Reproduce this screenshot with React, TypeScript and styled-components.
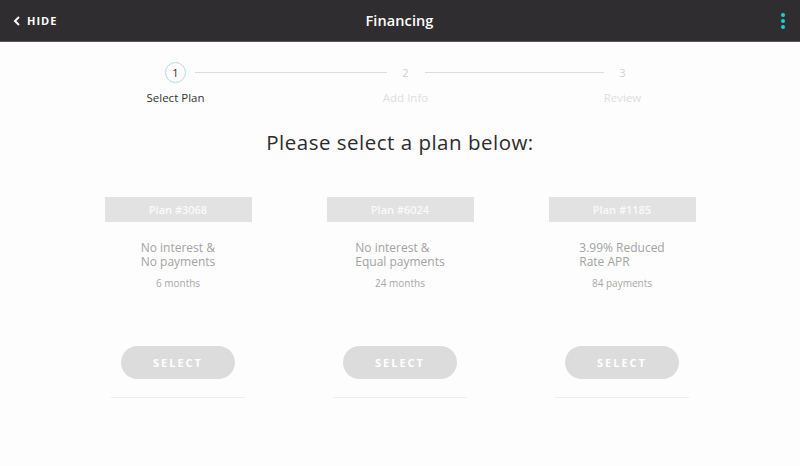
import React from "react";
import styled, { createGlobalStyle } from "styled-components";

const Global = createGlobalStyle`
  html, body { margin: 0; padding: 0; background: #fdfdfd; }
  body { font-family: "Open Sans", "Liberation Sans", sans-serif; }
  * { box-sizing: border-box; }
`;

const Page = styled.div`
  width: 800px;
  height: 466px;
  display: flex;
  flex-direction: column;
  background: #fdfdfd;
  overflow: hidden;
`;

const TopBar = styled.header`
  height: 42px;
  background: #2f2d2f;
  border-bottom: 1px solid #5a585a;
  display: grid;
  grid-template-columns: 1fr auto 1fr;
  align-items: center;
  padding: 0 14px 0 13px;
  color: #fff;
`;

const Back = styled.div`
  display: flex;
  align-items: center;
  gap: 6px;
  font-size: 11px;
  font-weight: 700;
  letter-spacing: 1px;
`;

const Title = styled.div`
  font-size: 14.5px;
  font-weight: 600;
  letter-spacing: 0.1px;
`;

const Dots = styled.div`
  justify-self: end;
  display: flex;
  flex-direction: column;
  gap: 2px;
  padding-right: 1px;
`;

const Dot = styled.span`
  width: 4px;
  height: 4px;
  border-radius: 50%;
  background: #1ccfcf;
`;

const Content = styled.main`
  display: flex;
  flex-direction: column;
  align-items: center;
  padding-top: 20px;
`;

const stepCols = "60px 170px 60px 157px 60px";

const Stepper = styled.div`
  display: grid;
  grid-template-columns: ${stepCols};
  align-items: center;
  margin-left: -2px;
`;

const StepCell = styled.div`
  display: flex;
  justify-content: center;
`;

const StepCircle = styled.div<{ $active?: boolean }>`
  width: 21px;
  height: 21px;
  border-radius: 50%;
  border: 1px solid ${(p) => (p.$active ? "#b8dcdc" : "transparent")};
  display: flex;
  align-items: center;
  justify-content: center;
  font-size: 11px;
  color: ${(p) => (p.$active ? "#333" : "#cfcfcf")};
`;

const StepLine = styled.div`
  height: 1px;
  background: #dcdcdc;
  margin: 0 -11px;
`;

const StepLabel = styled.div<{ $active?: boolean }>`
  text-align: center;
  font-size: 11.5px;
  color: ${(p) => (p.$active ? "#333" : "#dedede")};
  white-space: nowrap;
`;

const Labels = styled.div`
  display: grid;
  grid-template-columns: ${stepCols};
  margin-top: 7px;
  margin-left: -2px;
`;

const Heading = styled.h1`
  margin: 23px 0 0;
  font-size: 20.5px;
  font-weight: 400;
  color: #2c2c2c;
  letter-spacing: 0.5px;
`;

const Plans = styled.div`
  display: grid;
  grid-template-columns: repeat(3, 147px);
  column-gap: 75px;
  margin-top: 41px;
`;

const Card = styled.div`
  display: flex;
  flex-direction: column;
  align-items: center;
`;

const PlanHead = styled.div`
  width: 147px;
  height: 25px;
  background: #e2e2e2;
  color: #fafafa;
  font-size: 11px;
  font-weight: 600;
  display: flex;
  align-items: center;
  justify-content: center;
`;

const Desc = styled.div`
  margin-top: 19px;
  font-size: 12px;
  line-height: 14px;
  color: #a3a3a3;
  display: flex;
  flex-direction: column;
  align-items: flex-start;
`;

const DescLine = styled.span`
  display: block;
  height: 14px;
`;

const Term = styled.div`
  margin-top: 7px;
  font-size: 10px;
  color: #a8a8a8;
`;

const SelectButton = styled.button`
  margin-top: 56px;
  width: 114px;
  height: 33px;
  border: none;
  border-radius: 17px;
  background: #dcdcdc;
  color: #fff;
  font-family: inherit;
  font-size: 11px;
  font-weight: 700;
  letter-spacing: 2px;
`;

const Rule = styled.div`
  margin-top: 18px;
  width: 134px;
  height: 1px;
  background: #ececec;
`;

const plans = [
  { id: "Plan #3068", lines: ["No interest &", "No payments"], term: "6 months" },
  { id: "Plan #6024", lines: ["No interest &", "Equal payments"], term: "24 months" },
  { id: "Plan #1185", lines: ["3.99% Reduced", "Rate APR"], term: "84 payments" },
];

export default function App() {
  return (
    <Page>
      <Global />
      <TopBar>
        <Back>
          <svg width="8" height="10" viewBox="0 0 8 10">
            <path d="M6 1 L2 5 L6 9" stroke="#fff" strokeWidth="2" fill="none" />
          </svg>
          HIDE
        </Back>
        <Title>Financing</Title>
        <Dots>
          <Dot />
          <Dot />
          <Dot />
        </Dots>
      </TopBar>
      <Content>
        <Stepper>
          <StepCell>
            <StepCircle $active>1</StepCircle>
          </StepCell>
          <StepLine />
          <StepCell>
            <StepCircle>2</StepCircle>
          </StepCell>
          <StepLine />
          <StepCell>
            <StepCircle>3</StepCircle>
          </StepCell>
        </Stepper>
        <Labels>
          <StepLabel $active>Select Plan</StepLabel>
          <span />
          <StepLabel>Add Info</StepLabel>
          <span />
          <StepLabel>Review</StepLabel>
        </Labels>
        <Heading>Please select a plan below:</Heading>
        <Plans>
          {plans.map((p) => (
            <Card key={p.id}>
              <PlanHead>{p.id}</PlanHead>
              <Desc>
                <DescLine>{p.lines[0]}</DescLine>
                <DescLine>{p.lines[1]}</DescLine>
              </Desc>
              <Term>{p.term}</Term>
              <SelectButton>SELECT</SelectButton>
              <Rule />
            </Card>
          ))}
        </Plans>
      </Content>
    </Page>
  );
}
